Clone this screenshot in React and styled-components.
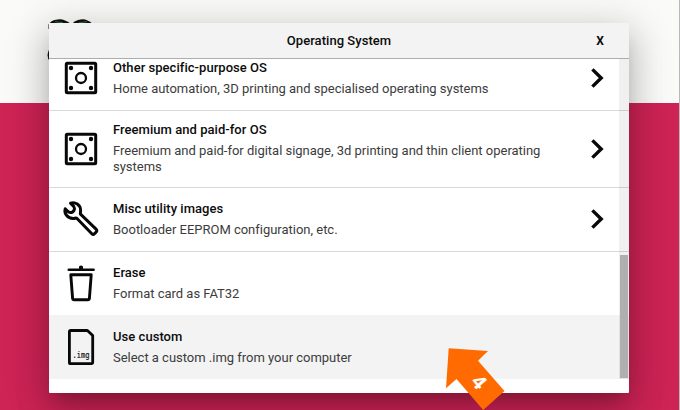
import React from 'react';
import styled, { createGlobalStyle } from 'styled-components';

const GlobalStyle = createGlobalStyle`
  * { box-sizing: border-box; }
  html, body { margin: 0; padding: 0; overflow: hidden; }
`;
const Screen = styled.main`
  position: relative;
  width: 680px;
  height: 410px;
  padding: 23px 0 0 49px;
  overflow: hidden;
  font-family: Roboto, sans-serif;
  color: #0c0c0c;
  background: linear-gradient(#fafaf9 0 103px, #cd2355 103px);
  border-right: 1px solid #b9b9b9;
`;
const Logo = styled.svg`
  position: absolute;
  left: 44px;
  top: 14px;
`;
const Dialog = styled.section`
  position: relative;
  width: 580px;
  height: 370px;
  background: #fff;
  border-radius: 1px;
  box-shadow: 0 11px 15px -7px rgba(0, 0, 0, 0.2), 0 18px 34px 2px rgba(0, 0, 0, 0.15), 0 7px 42px 6px rgba(0, 0, 0, 0.14);
  display: flex;
  flex-direction: column;
`;
const Header = styled.header`
  height: 36px;
  flex: none;
  display: grid;
  grid-template-columns: 1fr 58px;
  align-items: center;
  background: #f3f3f3;
  border-bottom: 1px solid #adadad;
`;
const Title = styled.h1`
  margin: 0;
  padding-left: 58px;
  text-align: center;
  font-size: 13px;
  line-height: 18px;
  font-weight: 500;
  letter-spacing: 0.04px;
`;
const Close = styled.button`
  border: 0;
  padding: 0;
  background: none;
  font: 700 12px/18px Roboto, sans-serif;
  color: #0c0c0c;
`;
const Body = styled.div`
  height: 320px;
  display: grid;
  grid-template-columns: 570px 10px;
`;
const List = styled.div`
  display: flex;
  flex-direction: column;
`;
const Row = styled.div`
  height: ${p => p.$h}px;
  width: 580px;
  flex: none;
  display: grid;
  grid-template-columns: 64px 1fr 60px;
  align-items: start;
  padding-top: ${p => p.$top}px;
  background: ${p => (p.$active ? '#f3f3f3' : '#fff')};
  border-bottom: ${p => (p.$line ? '1px solid #d9d9d9' : '0')};
`;
const IconBox = styled.div`
  height: 40px;
  margin-top: ${p => p.$shift}px;
  padding-left: 12px;
  svg { display: block; }
`;
const Name = styled.div`
  font-size: 13px;
  line-height: 16px;
  font-weight: 500;
  letter-spacing: 0.04px;
`;
const Detail = styled.div`
  margin-top: 5px;
  width: 450px;
  font-size: 13px;
  line-height: 16px;
  letter-spacing: -0.015px;
  color: #3c3c3c;
`;
const Chevron = styled.svg`
  margin: ${p => p.$shift}px 0 0 18px;
`;
const Track = styled.div`
  z-index: 1;
  background: rgba(0, 0, 0, 0.06);
  padding: 196px 1px 1px;
`;
const Thumb = styled.div`
  height: 123px;
  background: #afafaf;
`;
const Callout = styled.svg`
  position: absolute;
  left: 440px;
  top: 340px;
`;

const stroke = { fill: 'none', stroke: '#080808', strokeLinejoin: 'round', strokeLinecap: 'round' };

function Board() {
  return (
    <svg width="40" height="40" viewBox="0 0 40 40">
      <rect x="5.3" y="5.3" width="29.4" height="29.4" rx="1" {...stroke} strokeWidth="3" />
      <circle cx="20" cy="20" r="5" {...stroke} strokeWidth="2.3" />
      {[[10, 10], [30, 10], [10, 30], [30, 30]].map(([x, y]) => (
        <circle key={`${x}-${y}`} cx={x} cy={y} r="2.2" fill="#080808" />
      ))}
    </svg>
  );
}
function Wrench() {
  return (
    <svg width="40" height="40" viewBox="0 0 40 40">
      <path
        d="M9.5 4.2C14 2.4 19.7 5.6 19.6 11.6C19.6 13 19.1 14.2 19.5 15.2L35.3 30.4Q36.4 31.8 35.1 33.1L33.4 34.8Q32.1 36 30.8 34.7L15.8 19.2C14.8 18.6 13.6 19.6 12 19.5C6.8 19.2 2.9 15 4.2 9.8L7.6 13Q9.4 14.1 11.4 13.1L12.9 11.6Q14.1 9.8 12.9 7.6Z"
        {...stroke}
        strokeWidth="3"
      />
    </svg>
  );
}
function Trash() {
  return (
    <svg width="40" height="40" viewBox="0 0 40 40">
      <path d="M7.8 6.8H32.6" {...stroke} strokeWidth="2.6" />
      <path d="M18 6.5V3.6q2-2.4 4 0V6.5Z" fill="#080808" />
      <path d="M9.8 11.8H30.2L28.4 35.6Q28.3 36.7 27.2 36.7H12.8Q11.7 36.7 11.6 35.6Z" {...stroke} strokeWidth="2.9" />
    </svg>
  );
}
function ImageFile() {
  return (
    <svg width="40" height="40" viewBox="0 0 40 40">
      <path d="M9.6 3.5H26.4L31.7 8.6V35.3Q31.7 36.6 30.3 36.6H9.6Q8.4 36.6 8.4 35.4V4.7Q8.4 3.5 9.6 3.5Z" {...stroke} strokeWidth="2.8" />
      <text x="11.6" y="31.2" textLength="17" lengthAdjust="spacingAndGlyphs" fontSize="9.5" fontFamily="DejaVu Sans Mono, monospace" fill="#111" stroke="#111" strokeWidth="0.2">.img</text>
    </svg>
  );
}

const entries = [
  { name: 'Other specific-purpose OS', detail: 'Home automation, 3D printing and specialised operating systems', Icon: Board, h: 52, top: 1, icon: -2, arrow: 7, line: true },
  { name: 'Freemium and paid-for OS', detail: 'Freemium and paid-for digital signage, 3d printing and thin client operating systems', Icon: Board, h: 77, top: 11, icon: 7, arrow: 16, line: true },
  { name: 'Misc utility images', detail: 'Bootloader EEPROM configuration, etc.', Icon: Wrench, h: 64, top: 13, icon: -2, arrow: 7, line: true },
  { name: 'Erase', detail: 'Format card as FAT32', Icon: Trash, h: 63, top: 13, icon: -2 },
  { name: 'Use custom', detail: 'Select a custom .img from your computer', Icon: ImageFile, h: 64, top: 14, icon: -2, active: true },
];

export default function App() {
  return (
    <Screen>
      <GlobalStyle />
      <Logo width="60" height="56" viewBox="0 0 60 56">
        <path d="M4.5 15V10.5Q7 6.5 12 5.7Q17 4.5 21 6.5Q25 7.5 26.5 10H28Q30 7 34 6Q40 4.5 43 6.3Q47 7.5 49 10.5Z" fill="#111" />
        <path d="M11 7.6l8 1.2M43 7.6l-8 1.2" stroke="#347a3b" strokeWidth="1" />
        <circle cx="13" cy="41" r="9.5" fill="#111" />
      </Logo>
      <Dialog>
        <Header>
          <Title>Operating System</Title>
          <Close>X</Close>
        </Header>
        <Body>
          <List>
            {entries.map(({ name, detail, Icon, h, top, icon, arrow, line, active }) => (
              <Row key={name} $h={h} $top={top} $line={line} $active={active}>
                <IconBox $shift={icon}><Icon /></IconBox>
                <div>
                  <Name>{name}</Name>
                  <Detail>{detail}</Detail>
                </div>
                {arrow && (
                  <Chevron $shift={arrow} width="20" height="22" viewBox="0 0 20 22">
                    <path d="M5.4 2.4L14.2 11L5.4 19.6" fill="none" stroke="#080808" strokeWidth="3.4" />
                  </Chevron>
                )}
              </Row>
            ))}
          </List>
          <Track><Thumb /></Track>
        </Body>
      </Dialog>
      <Callout width="70" height="70" viewBox="0 0 70 70">
        <path d="M8.7 8.3L48 11L38 20.7L64.5 51L43.2 70L16.5 39L6 48.3Z" fill="#ff6b00" />
        <text transform="translate(39 42) rotate(49)" textAnchor="middle" y="7" fontSize="20" fontWeight="700" fontFamily="Open Sans, sans-serif" fill="#fff">4</text>
      </Callout>
    </Screen>
  );
}
